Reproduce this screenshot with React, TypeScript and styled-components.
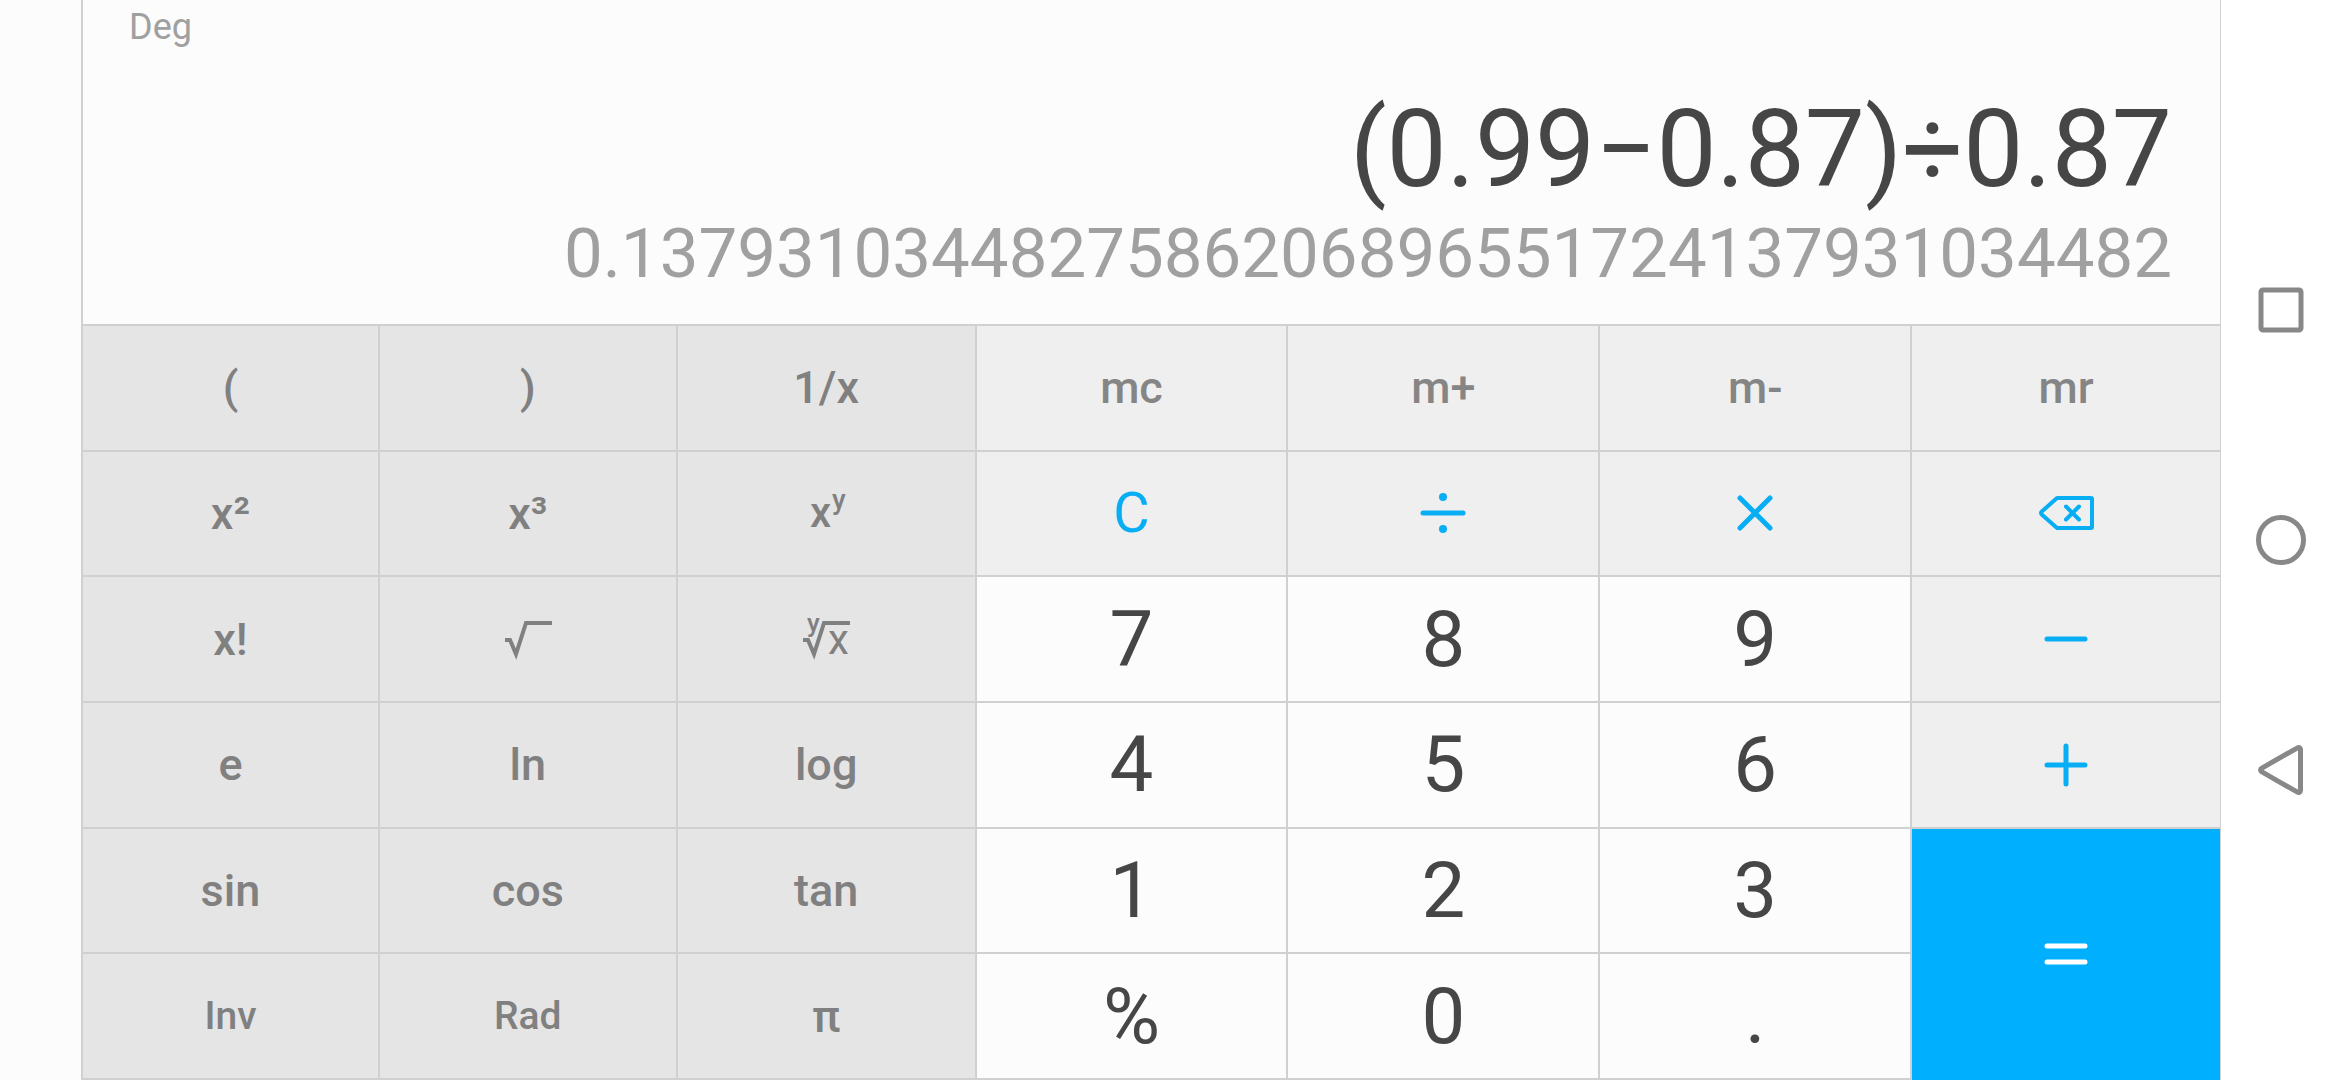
import type { ReactNode } from "react";
import styled, { createGlobalStyle, css } from "styled-components";

const GlobalStyle = createGlobalStyle`
  *, *::before, *::after { box-sizing: border-box; }
  body {
    margin: 0;
    background: #fcfcfc;
    font-family: Roboto, "Noto Sans", sans-serif;
  }
`;

const line = "#d0d0d0";
const accent = "#08aef4";

const Screen = styled.div`
  display: grid;
  grid-template-columns: 81px minmax(0, 1fr) 119px;
  min-height: 100vh;
`;

const Calculator = styled.main`
  grid-column: 2;
  display: grid;
  grid-template-rows: minmax(0, 3fr) minmax(0, 7fr);
  border-left: 2px solid ${line};
  border-right: 1px solid ${line};
`;

const Display = styled.section`
  display: flex;
  flex-direction: column;
  padding: 6px 48px 0 46px;
  color: #a0a0a0;
`;

const AngleMode = styled.span`
  font-size: 36px;
  line-height: 42px;
  margin-bottom: 38px;
`;

const Expression = styled.output`
  color: #464646;
  font-size: 107px;
  line-height: 128px;
  text-align: right;
`;

const Result = styled.output`
  font-size: 69px;
  line-height: 80px;
  text-align: right;
`;

const Keypad = styled.section`
  display: grid;
  grid-template-columns: 297fr 298fr 299fr repeat(3, 312fr) 308fr;
  grid-template-rows: repeat(6, minmax(0, 1fr));
  border-top: 2px solid ${line};
`;

type Kind = "fn" | "mode" | "memory" | "clear" | "op" | "digit" | "equals";

const kinds = {
  fn: css`background: #e5e5e5; color: #808080; font-size: 45px; font-weight: 500;`,
  mode: css`background: #e5e5e5; color: #808080; font-size: 39px; font-weight: 500;`,
  memory: css`background: #efefef; color: #858585; font-size: 45px; font-weight: 500;`,
  clear: css`background: #efefef; color: ${accent}; font-size: 56px;`,
  op: css`background: #efefef; color: ${accent};`,
  digit: css`background: #fcfcfc; color: #464646; font-size: 78px;`,
  equals: css`background: #00b0ff; color: #fff; grid-row: span 2; border: 0;`,
};

const Key = styled.button<{ $kind: Kind }>`
  display: flex;
  align-items: center;
  justify-content: center;
  padding: 0;
  border: solid ${line};
  border-width: 0 2px 2px 0;
  font-family: inherit;
  font-weight: 400;
  cursor: pointer;
  ${({ $kind }) => kinds[$kind]}
  &:nth-child(7n) { border-right-width: 0; }
`;

const Glyph = styled.svg<{ $stroke?: number; $sharp?: boolean }>`
  display: block;
  fill: none;
  stroke: currentColor;
  stroke-width: ${({ $stroke = 5 }) => $stroke};
  stroke-linecap: ${({ $sharp }) => ($sharp ? "butt" : "round")};
  stroke-linejoin: ${({ $sharp }) => ($sharp ? "miter" : "round")};
  text {
    fill: currentColor;
    stroke: none;
  }
`;

const Dot = styled.circle`
  fill: currentColor;
  stroke: none;
`;

const NavBar = styled.nav`
  display: flex;
  flex-direction: column;
  align-items: center;
  justify-content: center;
  background: #fff;
`;

const NavButton = styled.button`
  display: flex;
  align-items: center;
  justify-content: center;
  width: 100%;
  height: 230px;
  padding: 0;
  border: 0;
  background: none;
  color: #888;
  cursor: pointer;
`;

const radical = "M2 23h5l6 14 10 -31h26";

const Power = () => (
  <Glyph width="46" height="60" viewBox="0 -6 46 60">
    <text x="7" y="38" fontSize="42" fontWeight="500">x</text>
    <text x="29" y="20" fontSize="28" fontWeight="500">y</text>
  </Glyph>
);

const Sqrt = () => (
  <Glyph width="50" height="44" viewBox="0 0 50 44" $stroke={4} $sharp>
    <path d={radical} />
  </Glyph>
);

const Root = () => (
  <Glyph width="50" height="72" viewBox="0 -14 50 72" $stroke={4} $sharp>
    <path d={radical} />
    <text x="6" y="15" fontSize="26" fontWeight="500">y</text>
    <text x="27" y="37" fontSize="42" fontWeight="400">x</text>
  </Glyph>
);

const Divide = () => (
  <Glyph width="48" height="44" viewBox="0 0 48 44">
    <path d="M4 22h40" />
    <Dot cx="24" cy="6" r="4" />
    <Dot cx="24" cy="38" r="4" />
  </Glyph>
);

const Multiply = () => (
  <Glyph width="40" height="40" viewBox="0 0 40 40">
    <path d="M5 5l30 30M35 5L5 35" />
  </Glyph>
);

const Backspace = () => (
  <Glyph width="58" height="40" viewBox="0 0 58 40" $stroke={4}>
    <path d="M20 5h34a1 1 0 0 1 1 1v28a1 1 0 0 1 -1 1H20L4.500 21.200a2 2 0 0 1 0 -2.400z" />
    <path d="M29 13.500l13 13M42 13.500l-13 13" />
  </Glyph>
);

const Minus = () => (
  <Glyph width="48" height="48" viewBox="0 0 48 48">
    <path d="M5 24h38" />
  </Glyph>
);

const Plus = () => (
  <Glyph width="48" height="48" viewBox="0 0 48 48">
    <path d="M5 24h38M24 5v38" />
  </Glyph>
);

const Equals = () => (
  <Glyph width="48" height="48" viewBox="0 0 48 48">
    <path d="M5 16h38M5 32h38" />
  </Glyph>
);

type KeyDef = { label: string; kind: Kind; icon?: ReactNode };

const keys: KeyDef[] = [
  { label: "(", kind: "fn" },
  { label: ")", kind: "fn" },
  { label: "1/x", kind: "fn" },
  { label: "mc", kind: "memory" },
  { label: "m+", kind: "memory" },
  { label: "m-", kind: "memory" },
  { label: "mr", kind: "memory" },
  { label: "x²", kind: "fn" },
  { label: "x³", kind: "fn" },
  { label: "x to the power y", kind: "fn", icon: <Power /> },
  { label: "C", kind: "clear" },
  { label: "Divide", kind: "op", icon: <Divide /> },
  { label: "Multiply", kind: "op", icon: <Multiply /> },
  { label: "Backspace", kind: "op", icon: <Backspace /> },
  { label: "x!", kind: "fn" },
  { label: "Square root", kind: "fn", icon: <Sqrt /> },
  { label: "y-th root of x", kind: "fn", icon: <Root /> },
  { label: "7", kind: "digit" },
  { label: "8", kind: "digit" },
  { label: "9", kind: "digit" },
  { label: "Subtract", kind: "op", icon: <Minus /> },
  { label: "e", kind: "fn" },
  { label: "ln", kind: "fn" },
  { label: "log", kind: "fn" },
  { label: "4", kind: "digit" },
  { label: "5", kind: "digit" },
  { label: "6", kind: "digit" },
  { label: "Add", kind: "op", icon: <Plus /> },
  { label: "sin", kind: "fn" },
  { label: "cos", kind: "fn" },
  { label: "tan", kind: "fn" },
  { label: "1", kind: "digit" },
  { label: "2", kind: "digit" },
  { label: "3", kind: "digit" },
  { label: "Equals", kind: "equals", icon: <Equals /> },
  { label: "Inv", kind: "mode" },
  { label: "Rad", kind: "mode" },
  { label: "π", kind: "fn" },
  { label: "%", kind: "digit" },
  { label: "0", kind: "digit" },
  { label: ".", kind: "digit" },
];

export default function App() {
  return (
    <>
      <GlobalStyle />
      <Screen>
        <Calculator>
          <Display>
            <AngleMode>Deg</AngleMode>
            <Expression>(0.99−0.87)÷0.87</Expression>
            <Result>{"0.137931034482758620689655172413793103" + "4482"}</Result>
          </Display>
          <Keypad>
            {keys.map(({ label, kind, icon }) => (
              <Key key={label} type="button" $kind={kind} aria-label={icon ? label : undefined}>
                {icon ?? label}
              </Key>
            ))}
          </Keypad>
        </Calculator>
        <NavBar>
          <NavButton type="button" aria-label="Recent apps">
            <Glyph width="52" height="52" viewBox="0 0 52 52">
              <rect x="6" y="6" width="40" height="40" rx="2" />
            </Glyph>
          </NavButton>
          <NavButton type="button" aria-label="Home">
            <Glyph width="52" height="52" viewBox="0 0 52 52">
              <circle cx="26" cy="26" r="22.500" />
            </Glyph>
          </NavButton>
          <NavButton type="button" aria-label="Back">
            <Glyph width="52" height="52" viewBox="0 0 52 52">
              <path d="M43.500 3.500a2 2 0 0 1 2 2v41a2 2 0 0 1 -3 1.700L6.500 27.700a2 2 0 0 1 0 -3.400L42.500 3.800a2 2 0 0 1 1 -0.300z" />
            </Glyph>
          </NavButton>
        </NavBar>
      </Screen>
    </>
  );
}
